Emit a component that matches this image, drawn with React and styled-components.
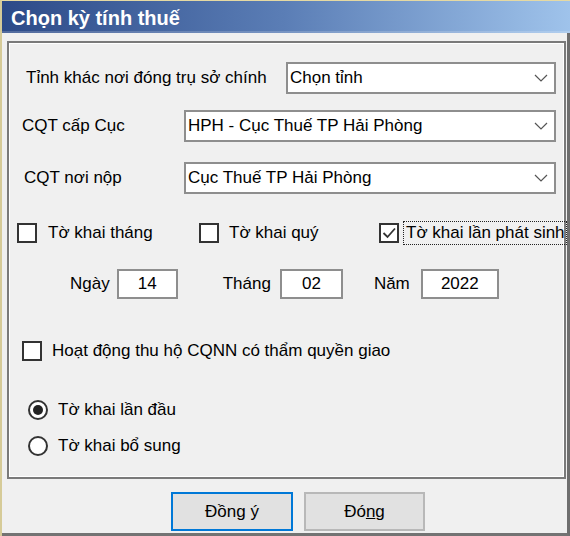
import React from "react";
import styled, { createGlobalStyle } from "styled-components";

const GlobalStyle = createGlobalStyle`
  html, body { margin: 0; padding: 0; background: #f0f0f0; }
  body { font-family: "Liberation Sans", Arial, sans-serif; color: #000; }
`;

const Window = styled.div`
  box-sizing: border-box;
  width: 570px;
  height: 536px;
  background: #f0f0f0;
  border-top: 1px solid #e5d9a3;
  border-left: 2px solid #d6cb98;
  display: flex;
  flex-direction: column;
`;

const TitleBar = styled.div`
  box-sizing: border-box;
  height: 32px;
  padding: 3px 0 0 9px;
  line-height: 29px;
  font-size: 20px;
  font-weight: bold;
  color: #fff;
  background: linear-gradient(to right, #2c4a88 0%, #5b7eb6 50%, #9fc3eb 100%);
  box-shadow: inset 0 -2px 0 rgba(255, 255, 255, 0.18);
`;

const Body = styled.div`
  box-sizing: border-box;
  flex: 1;
  padding: 8px 0 0 5px;
  border-right: 3px solid #6e6e6e;
  border-bottom: 3px solid #737373;
`;

const Group = styled.div`
  box-sizing: border-box;
  width: 559px;
  height: 438px;
  border: 2px solid #7a7a7a;
  box-shadow: inset 1px 1px 0 #fff, inset -1px -1px 0 #fff;
  display: flex;
  flex-direction: column;
`;

const Row = styled.div`
  display: flex;
  align-items: center;
  height: ${(p) => p.$h}px;
  margin-top: ${(p) => p.$mt}px;
  padding-left: ${(p) => p.$pl}px;
  padding-right: 8px;
  font-size: 17px;
`;

const Label = styled.span`
  white-space: nowrap;
  margin-left: ${(p) => p.$ml || 0}px;
`;

const Select = styled.div`
  box-sizing: border-box;
  margin-left: auto;
  width: ${(p) => p.$w}px;
  height: 32px;
  background: #fff;
  border: 2px solid #8e8e8e;
  display: flex;
  align-items: center;
  padding: 0 6px 0 2px;
  font-size: 17px;
`;

const SelectText = styled.span`
  flex: 1;
  white-space: nowrap;
`;

const Chevron = () => (
  <svg width="14" height="8" viewBox="0 0 14 8">
    <path d="M1 1 L7 7 L13 1" fill="none" stroke="#555" strokeWidth="1.2" />
  </svg>
);

const CheckGrid = styled.div`
  display: grid;
  grid-template-columns: 182px 180px auto;
  align-items: center;
  height: 22px;
  margin-top: 28px;
  padding-left: 8px;
  font-size: 17px;
`;

const CheckItem = styled.div`
  display: flex;
  align-items: center;
  white-space: nowrap;
`;

const Box = styled.div`
  box-sizing: border-box;
  width: 20px;
  height: 20px;
  border: 2px solid #333;
  background: #fff;
  flex: none;
  display: flex;
  align-items: center;
  justify-content: center;
  margin-right: ${(p) => p.$gap}px;
`;

const Focus = styled.span`
  outline: 1px dotted #222;
  padding: 0 1px 1px 2px;
  line-height: 21px;
`;

const Input = styled.div`
  box-sizing: border-box;
  width: ${(p) => p.$w}px;
  height: 30px;
  margin-left: ${(p) => p.$ml}px;
  background: #fff;
  border: 2px solid #8e8e8e;
  display: flex;
  align-items: center;
  justify-content: center;
  font-size: 17px;
`;

const Radio = styled.div`
  box-sizing: border-box;
  width: 20px;
  height: 20px;
  border-radius: 50%;
  border: 2px solid #333;
  background: #fff;
  margin-right: 10px;
  flex: none;
  display: flex;
  align-items: center;
  justify-content: center;
`;

const Dot = styled.div`
  width: 10px;
  height: 10px;
  border-radius: 50%;
  background: #222;
`;

const ButtonRow = styled.div`
  display: flex;
  gap: 11px;
  margin-top: 13px;
  padding-left: 164px;
`;

const Button = styled.div`
  box-sizing: border-box;
  width: ${(p) => p.$w}px;
  height: 39px;
  background: #e1e1e1;
  border: 2px solid ${(p) => (p.$primary ? "#0078d7" : "#b8b8b8")};
  display: flex;
  align-items: center;
  justify-content: center;
  font-size: 17px;
`;

const Check = () => (
  <svg width="16" height="16" viewBox="0 0 16 16">
    <path d="M2.5 8 L6.5 12 L14 3.5" fill="none" stroke="#333" strokeWidth="1.8" />
  </svg>
);

export default function App() {
  return (
    <>
      <GlobalStyle />
      <Window>
        <TitleBar>Chọn kỳ tính thuế</TitleBar>
        <Body>
          <Group>
            <Row $h={32} $mt={19} $pl={17}>
              <Label>Tỉnh khác nơi đóng trụ sở chính</Label>
              <Select $w={270}>
                <SelectText>Chọn tỉnh</SelectText>
                <Chevron />
              </Select>
            </Row>
            <Row $h={32} $mt={16} $pl={13}>
              <Label>CQT cấp Cục</Label>
              <Select $w={372}>
                <SelectText>HPH - Cục Thuế TP Hải Phòng</SelectText>
                <Chevron />
              </Select>
            </Row>
            <Row $h={32} $mt={20} $pl={15}>
              <Label>CQT nơi nộp</Label>
              <Select $w={372}>
                <SelectText>Cục Thuế TP Hải Phòng</SelectText>
                <Chevron />
              </Select>
            </Row>
            <CheckGrid>
              <CheckItem>
                <Box $gap={11} />
                Tờ khai tháng
              </CheckItem>
              <CheckItem>
                <Box $gap={10} />
                Tờ khai quý
              </CheckItem>
              <CheckItem>
                <Box $gap={5}>
                  <Check />
                </Box>
                <Focus>Tờ khai lần phát sinh</Focus>
              </CheckItem>
            </CheckGrid>
            <Row $h={30} $mt={25} $pl={61}>
              <Label>Ngày</Label>
              <Input $w={61} $ml={7}>14</Input>
              <Label $ml={45}>Tháng</Label>
              <Input $w={63} $ml={9}>02</Input>
              <Label $ml={31}>Năm</Label>
              <Input $w={78} $ml={11}>2022</Input>
            </Row>
            <Row $h={22} $mt={41} $pl={13}>
              <Box $gap={10} />
              <Label>Hoạt động thu hộ CQNN có thẩm quyền giao</Label>
            </Row>
            <Row $h={22} $mt={37} $pl={19}>
              <Radio>
                <Dot />
              </Radio>
              <Label>Tờ khai lần đầu</Label>
            </Row>
            <Row $h={22} $mt={14} $pl={19}>
              <Radio />
              <Label>Tờ khai bổ sung</Label>
            </Row>
          </Group>
          <ButtonRow>
            <Button $w={122} $primary>
              <span>
                Đồn<u>g</u> ý
              </span>
            </Button>
            <Button $w={121}>
              <span>
                Đó<u>n</u>g
              </span>
            </Button>
          </ButtonRow>
        </Body>
      </Window>
    </>
  );
}
